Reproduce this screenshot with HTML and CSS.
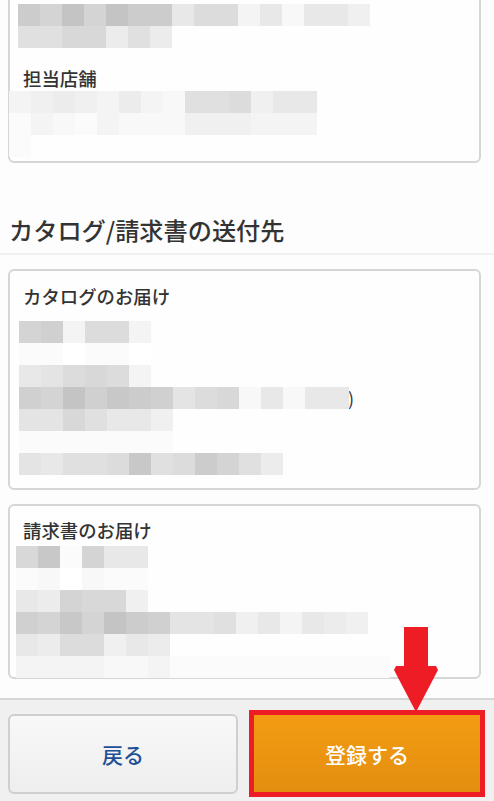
FILE: index.html
```html
<!DOCTYPE html>
<html lang="ja">
<head>
<meta charset="utf-8">
<title>カタログ/請求書の送付先</title>
<link rel="stylesheet" href="styles.css">
</head>
<body>
<div class="page">
  <main class="content">
    <section class="card card-shop">
      <div class="mosaic m-18">
        <div class="mrow"><i class="gcc"></i><i class="gd4"></i><i class="gc4"></i><i class="gd4"></i><i class="gc4"></i><i class="gcc"></i><i class="gcc"></i><i class="ge8"></i><i class="gdc"></i><i class="gdc"></i><i class="gf4"></i><i class="ge8"></i><i class="gf8"></i><i class="ge8"></i><i class="ge8"></i><i class="gf0"></i></div>
        <div class="mrow"><i class="ge0"></i><i class="ge0"></i><i class="gd8"></i><i class="gd8"></i><i class="gec"></i><i class="ge0"></i><i class="gec"></i></div>
      </div>
      <h3 class="label label-shop">担当店舗</h3>
      <div class="mosaic m-9">
        <div class="mrow"><i class="gf4"></i><i class="gf0"></i><i class="gec"></i><i class="gf0"></i><i class="gf4"></i><i class="gec"></i><i class="gf4"></i><i class="gf8"></i><i class="ge0"></i><i class="ge0"></i><i class="gdc"></i><i class="gf0"></i><i class="ge8"></i><i class="ge8"></i></div>
        <div class="mrow"><i class="gfc"></i><i class="gf4"></i><i class="gf8"></i><i class="gfc"></i><i class="gf4"></i><i class="gf8"></i><i class="gf8"></i><i class="gf8"></i><i class="gf0"></i><i class="gf0"></i><i class="gf0"></i><i class="gf4"></i><i class="gf4"></i><i class="gf4"></i></div>
        <div class="mrow"><i class="gfc"></i></div>
      </div>
    </section>

    <h2 class="section-title">カタログ/請求書の送付先</h2>

    <section class="card card-catalog">
      <h3 class="label label-catalog">カタログのお届け</h3>
      <div class="mosaic m-19">
        <div class="mrow"><i class="gd4"></i><i class="gd0"></i><i class="gf4"></i><i class="gdc"></i><i class="gdc"></i><i class="gf4"></i></div>
        <div class="mrow"><i class="gfc"></i><i class="gfc"></i><i class="gff"></i><i class="gfc"></i><i class="gfc"></i><i class="gff"></i></div>
        <div class="mrow"><i class="ge8"></i><i class="ge4"></i><i class="gdc"></i><i class="gd8"></i><i class="gdc"></i><i class="gf4"></i></div>
        <div class="mrow"><i class="gd0"></i><i class="gd4"></i><i class="gc4"></i><i class="gd0"></i><i class="gc8"></i><i class="gcc"></i><i class="gd0"></i><i class="ge4"></i><i class="gdc"></i><i class="gd8"></i><i class="gf8"></i><i class="ge8"></i><i class="gf8"></i><i class="ge8"></i><i class="ge8"></i><span class="peek">)</span></div>
        <div class="mrow"><i class="ge4"></i><i class="ge4"></i><i class="gd8"></i><i class="ge0"></i><i class="ge8"></i><i class="ge8"></i><i class="gf0"></i></div>
        <div class="mrow"><i class="gfc"></i><i class="gfc"></i><i class="gfc"></i><i class="gfc"></i><i class="gfc"></i><i class="gfc"></i><i class="gfc"></i></div>
        <div class="mrow"><i class="ge4"></i><i class="ge8"></i><i class="ge0"></i><i class="ge0"></i><i class="gdc"></i><i class="gc8"></i><i class="ge0"></i><i class="gdc"></i><i class="gcc"></i><i class="gd4"></i><i class="ge0"></i><i class="gec"></i></div>
      </div>
    </section>

    <section class="card card-invoice">
      <h3 class="label label-invoice">請求書のお届け</h3>
      <div class="mosaic m-16">
        <div class="mrow"><i class="gd8"></i><i class="gc8"></i><i class="gfc"></i><i class="gd4"></i><i class="ge8"></i><i class="ge8"></i></div>
        <div class="mrow"><i class="gfc"></i><i class="gf8"></i><i class="gff"></i><i class="gf8"></i><i class="gfc"></i><i class="gfc"></i></div>
        <div class="mrow"><i class="ge8"></i><i class="gec"></i><i class="gd4"></i><i class="gd8"></i><i class="gd8"></i><i class="gf0"></i></div>
        <div class="mrow"><i class="gd0"></i><i class="gd4"></i><i class="gc8"></i><i class="gd4"></i><i class="gc4"></i><i class="gcc"></i><i class="gd0"></i><i class="ge4"></i><i class="ge4"></i><i class="ge0"></i><i class="gf0"></i><i class="ge8"></i><i class="gf4"></i><i class="ge8"></i><i class="gec"></i><i class="gf0"></i></div>
        <div class="mrow"><i class="ge8"></i><i class="gec"></i><i class="gdc"></i><i class="gdc"></i><i class="gf0"></i><i class="ge8"></i><i class="gec"></i></div>
        <div class="mrow"><i class="gf4"></i><i class="gf4"></i><i class="gf4"></i><i class="gf4"></i><i class="gf8"></i><i class="gf8"></i><i class="gf4"></i><i class="gfc"></i><i class="gfc"></i><i class="gfc"></i><i class="gfc"></i><i class="gfc"></i><i class="gfc"></i><i class="gfc"></i><i class="gfc"></i><i class="gfc"></i><i class="gfc"></i></div>
      </div>
    </section>
  </main>

  <footer class="actions">
    <button class="btn btn-back" type="button">戻る</button>
    <button class="btn btn-submit" type="button">登録する</button>
  </footer>

  <svg class="arrow" viewBox="0 0 44 86" width="44" height="86" aria-hidden="true">
    <polygon points="10,0 34,0 34,39 42,39 44,43 22,85 0,43 2,39 10,39"/>
  </svg>
</div>
</body>
</html>
```

FILE: styles.css
```css
* { box-sizing: border-box; }
html, body { margin: 0; padding: 0; }
body {
  background: #fdfdfd;
  color: #333;
  font-family: "Noto Sans CJK JP", "Noto Sans", sans-serif;
}
.page {
  position: relative;
  width: 494px;
  height: 801px;
  overflow: hidden;
  display: flex;
  flex-direction: column;
}
.content { flex: 1; min-height: 0; }

.card {
  margin: 0 13px 0 8px;
  background: #fefefe;
  border: 2px solid #d6d6d6;
  border-radius: 6px;
}
.card-shop { margin-top: -10px; padding: 12px 0 4px; }
.card-catalog { margin-top: 14px; padding: 15px 0 13px; }
.card-invoice { margin-top: 14px; padding: 14px 0 0; height: 175px; }

.label {
  margin: 0 0 0 13px;
  height: 22px;
  line-height: 20px;
  font-size: 18.4px;
  font-weight: 500;
  color: #333;
}
.label-shop { margin-top: 20px; margin-bottom: 1px; }
.label-catalog { margin-bottom: 13px; }
.label-invoice { margin-bottom: 4px; }

.section-title {
  margin: 51px 0 14px;
  padding: 0 0 5px 9px;
  height: 41px;
  line-height: 32px;
  font-size: 24.2px;
  font-weight: 500;
  color: #333;
  border-bottom: 2px solid #f1f1f1;
}

.mosaic { display: flex; flex-direction: column; }
.m-18 { margin-left: 8px; }
.m-9 { margin-left: -1px; }
.m-19 { margin-left: 9px; }
.m-16 { margin-left: 6px; }
.mrow { display: flex; height: 22px; }
.mrow i { display: block; width: 22px; height: 22px; flex: none; position: relative; z-index: 1; }
.peek {
  display: block;
  margin-left: -1px;
  line-height: 22px;
  font-size: 18px;
  color: #333;
}

.gc4 { background: #c4c4c4; }
.gc8 { background: #c8c8c8; }
.gcc { background: #cccccc; }
.gd0 { background: #d0d0d0; }
.gd4 { background: #d4d4d4; }
.gd8 { background: #d8d8d8; }
.gdc { background: #dcdcdc; }
.ge0 { background: #e0e0e0; }
.ge4 { background: #e4e4e4; }
.ge8 { background: #e8e8e8; }
.gec { background: #ececec; }
.gf0 { background: #f0f0f0; }
.gf4 { background: #f4f4f4; }
.gf8 { background: #f8f8f8; }
.gfc { background: #fbfbfb; }
.gff { background: #ffffff; }

.actions {
  flex: none;
  height: 103px;
  background: #f0f0f0;
  border-top: 2px solid #d6d6d6;
  display: flex;
  align-items: center;
  gap: 11px;
  padding: 6px 9px 0 8px;
}
.btn {
  font-family: inherit;
  font-size: 21px;
  font-weight: 500;
  padding: 0;
  cursor: pointer;
}
.btn-back {
  width: 230px;
  height: 80px;
  color: #1f5096;
  background: linear-gradient(#f8f8f8, #eeeeee);
  border: 2px solid #cfcfcf;
  border-radius: 6px;
}
.btn-submit {
  width: 236px;
  height: 87px;
  color: #fff;
  background: linear-gradient(#f39c12, #e38e10);
  border: 5px solid #ee1c25;
  border-radius: 0;
}
.arrow {
  position: absolute;
  left: 394px;
  top: 627px;
  fill: #ee1c25;
}
```
